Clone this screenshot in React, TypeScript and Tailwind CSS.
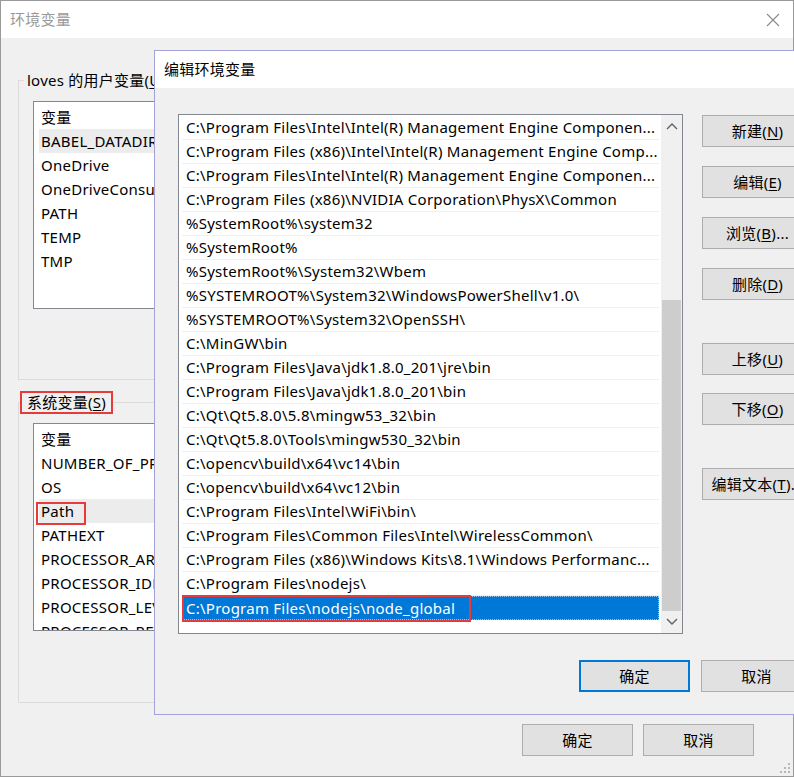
import React from "react";

const paths = [
  "C:\\Program Files\\Intel\\Intel(R) Management Engine Componen...",
  "C:\\Program Files (x86)\\Intel\\Intel(R) Management Engine Comp...",
  "C:\\Program Files\\Intel\\Intel(R) Management Engine Componen...",
  "C:\\Program Files (x86)\\NVIDIA Corporation\\PhysX\\Common",
  "%SystemRoot%\\system32",
  "%SystemRoot%",
  "%SystemRoot%\\System32\\Wbem",
  "%SYSTEMROOT%\\System32\\WindowsPowerShell\\v1.0\\",
  "%SYSTEMROOT%\\System32\\OpenSSH\\",
  "C:\\MinGW\\bin",
  "C:\\Program Files\\Java\\jdk1.8.0_201\\jre\\bin",
  "C:\\Program Files\\Java\\jdk1.8.0_201\\bin",
  "C:\\Qt\\Qt5.8.0\\5.8\\mingw53_32\\bin",
  "C:\\Qt\\Qt5.8.0\\Tools\\mingw530_32\\bin",
  "C:\\opencv\\build\\x64\\vc14\\bin",
  "C:\\opencv\\build\\x64\\vc12\\bin",
  "C:\\Program Files\\Intel\\WiFi\\bin\\",
  "C:\\Program Files\\Common Files\\Intel\\WirelessCommon\\",
  "C:\\Program Files (x86)\\Windows Kits\\8.1\\Windows Performanc...",
  "C:\\Program Files\\nodejs\\",
];

const userVars = ["BABEL_DATADIR", "OneDrive", "OneDriveConsumer", "PATH", "TEMP", "TMP"];
const sysVars = [
  "NUMBER_OF_PROCESSORS",
  "OS",
  "Path",
  "PATHEXT",
  "PROCESSOR_ARCHITECTURE",
  "PROCESSOR_IDENTIFIER",
  "PROCESSOR_LEVEL",
  "PROCESSOR_REVISION",
];

function WinButton({ label, mnemonic, suffix = "", focused = false }: { label: string; mnemonic?: string; suffix?: string; focused?: boolean }) {
  return (
    <button
      className={
        "h-[32px] w-[111px] shrink-0 flex items-center justify-center bg-[#e1e1e1] text-[15px] text-black " +
        (focused ? "border-2 border-[#0078d7]" : "border border-[#adadad]")
      }
    >
      {label}
      {mnemonic && (
        <>
          (<span className="underline underline-offset-2">{mnemonic}</span>){suffix}
        </>
      )}
    </button>
  );
}

// the part right of x=154 sits under the edit dialog, so the names are clipped there
function VarList({ items, selected, annotate }: { items: string[]; selected: number; annotate?: boolean }) {
  return (
    <div className="ml-[14px] mr-[14px] h-[208px] bg-white border border-[#828790] overflow-hidden pt-[3px] pl-[5px]">
      <div className="h-[24px] pl-[2px] flex items-center">变量</div>
      {items.map((v, i) => (
        <div key={v} className={"relative h-[24px] pl-[2px] flex items-center " + (i === selected ? "bg-[#ececec]" : "")}>
          <span className="w-[113px] overflow-hidden whitespace-nowrap">{v}</span>
          {annotate && i === selected && (
            <span className="absolute -left-[3px] top-[3px] w-[50px] h-[23px] border-2 border-[#e53b3b]" />
          )}
        </div>
      ))}
    </div>
  );
}

function Chevron({ up }: { up: boolean }) {
  return (
    <svg width="12" height="8" viewBox="0 0 12 8">
      <polyline
        points={up ? "1,7 6,2 11,7" : "1,1 6,6 11,1"}
        fill="none"
        stroke="#606060"
        strokeWidth="1.4"
      />
    </svg>
  );
}

export default function App() {
  return (
    <div className="relative w-[794px] h-[777px] overflow-hidden bg-[#f0f0f0] text-[15px] tracking-[0.25px] text-black font-['Noto_Sans','Noto_Sans_CJK_SC',sans-serif]">
      {/* 环境变量 window */}
      <div className="w-[794px] h-[777px] flex flex-col border border-[#9a9a9a]">
        <div className="h-[37px] bg-white flex items-center justify-between pl-[9px] pr-[13px] text-[#9a9a9a]">
          <span>环境变量</span>
          <svg width="14" height="14" viewBox="0 0 14 14">
            <path d="M1 1 L13 13 M13 1 L1 13" stroke="#8a8a8a" strokeWidth="1.1" />
          </svg>
        </div>

        <div className="relative mt-[42px] ml-[17px] mr-[17px] h-[300px] border border-[#dcdcdc] pt-[20px]">
          <span className="absolute left-[5px] -top-[12px] px-[3px] bg-[#f0f0f0] leading-[22px]">
            loves 的用户变量(<span className="underline underline-offset-2">U</span>)
          </span>
          <VarList items={userVars} selected={0} />
        </div>

        <div className="relative mt-[22px] ml-[17px] mr-[17px] h-[301px] border border-[#dcdcdc] pt-[20px]">
          <span className="absolute left-[1px] -top-[12px] px-[5px] bg-[#f0f0f0] leading-[19px] border-2 border-[#e53b3b]">
            系统变量(<span className="underline underline-offset-2">S</span>)
          </span>
          <VarList items={sysVars} selected={2} annotate />
        </div>

        <div className="flex-1" />
        <div className="flex justify-end gap-[10px] pr-[39px] pb-[20px]">
          <WinButton label="确定" />
          <WinButton label="取消" />
        </div>
        <svg className="absolute right-[3px] bottom-[3px]" width="12" height="12" viewBox="0 0 12 12">
          <g fill="#b8b8b8">
            <rect x="9" y="1" width="2" height="2" />
            <rect x="5" y="5" width="2" height="2" />
            <rect x="9" y="5" width="2" height="2" />
            <rect x="1" y="9" width="2" height="2" />
            <rect x="5" y="9" width="2" height="2" />
            <rect x="9" y="9" width="2" height="2" />
          </g>
        </svg>
      </div>

      {/* 编辑环境变量 window */}
      <div className="absolute left-[154px] top-[50px] w-[680px] h-[665px] flex flex-col border border-[#a3a3d9] bg-[#f0f0f0]">
        <div className="h-[37px] bg-white flex items-center pl-[9px]">编辑环境变量</div>

        <div className="flex mt-[26px] ml-[23px]">
          <div className="w-[505px] h-[520px] bg-white border border-[#828790] flex">
            <div className="flex-1 pl-[3px] pt-[1px] overflow-hidden">
              {paths.map((p, i) => (
                <div key={i} className="h-[24px] border-b border-[#f0f0f0] pl-[4px] flex items-center whitespace-nowrap overflow-hidden">
                  {p}
                </div>
              ))}
              <div className="relative h-[24px] pl-[4px] flex items-center whitespace-nowrap bg-[#0078d7] text-white outline outline-1 outline-dotted outline-[#9cc8ee] -outline-offset-1">
                C:\Program Files\nodejs\node_global
                <span className="absolute left-0 -top-[1px] w-[289px] h-[27px] border-2 border-[#e53b3b]" />
              </div>
            </div>
            <div className="w-[21px] ml-[2px] bg-[#f0f0f0] flex flex-col">
              <div className="h-[22px] flex items-center justify-center">
                <Chevron up />
              </div>
              <div className="h-[163px]" />
              <div className="h-[311px] mx-[1px] bg-[#cdcdcd]" />
              <div className="flex-1 flex items-center justify-center">
                <Chevron up={false} />
              </div>
            </div>
          </div>

          <div className="ml-[19px] pt-[1px] flex flex-col">
            <div className="flex flex-col gap-[19px]">
              <WinButton label="新建" mnemonic="N" />
              <WinButton label="编辑" mnemonic="E" />
              <WinButton label="浏览" mnemonic="B" suffix="..." />
              <WinButton label="删除" mnemonic="D" />
            </div>
            <div className="flex flex-col gap-[18px] mt-[43px]">
              <WinButton label="上移" mnemonic="U" />
              <WinButton label="下移" mnemonic="O" />
            </div>
            <div className="mt-[43px]">
              <WinButton label="编辑文本" mnemonic="T" suffix="..." />
            </div>
          </div>
        </div>

        <div className="flex gap-[11px] mt-[26px] ml-[424px]">
          <WinButton label="确定" focused />
          <WinButton label="取消" />
        </div>
      </div>
    </div>
  );
}
